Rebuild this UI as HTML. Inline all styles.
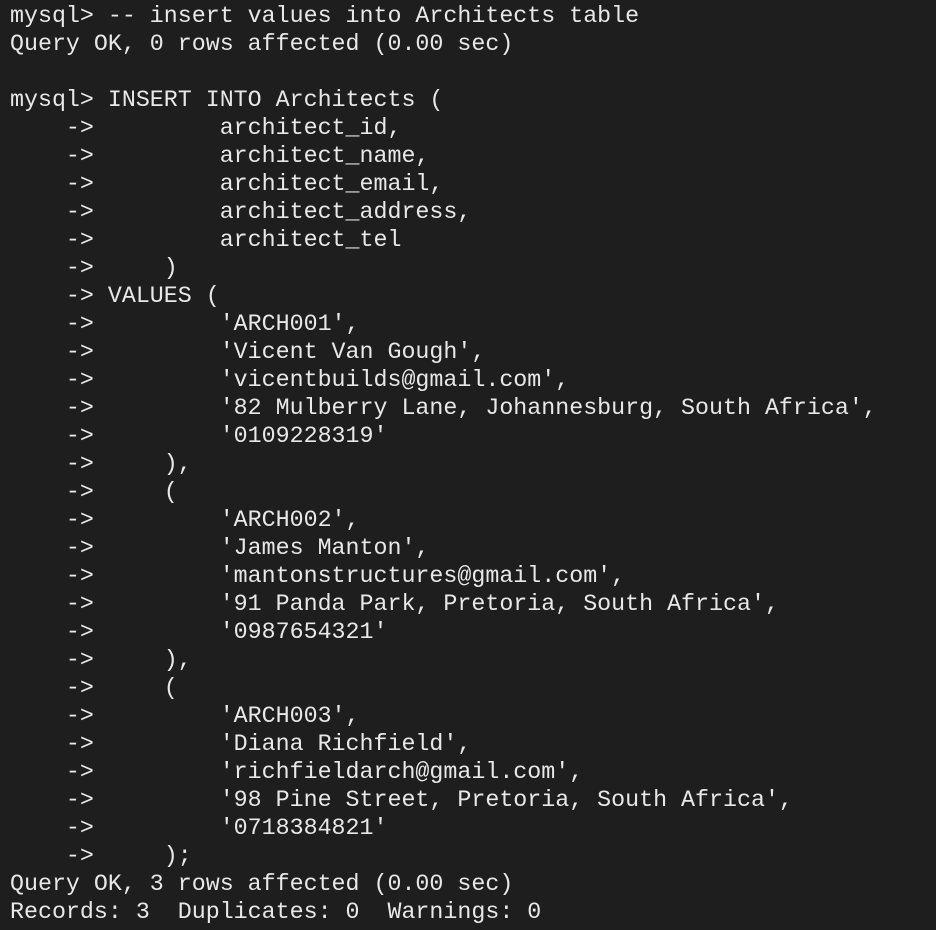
<!DOCTYPE html>
<html><head><style>
html,body{margin:0;padding:0;background:#1e1e1e;width:936px;height:930px;overflow:hidden}
pre{margin:0;padding:2px 0 0 10px;font-family:"Liberation Mono",monospace;font-size:23.3px;line-height:28px;color:#e8e8e8;white-space:pre}
</style></head><body><pre>mysql&gt; -- insert values into Architects table
Query OK, 0 rows affected (0.00 sec)

mysql&gt; INSERT INTO Architects (
    -&gt;         architect_id,
    -&gt;         architect_name,
    -&gt;         architect_email,
    -&gt;         architect_address,
    -&gt;         architect_tel
    -&gt;     )
    -&gt; VALUES (
    -&gt;         'ARCH001',
    -&gt;         'Vicent Van Gough',
    -&gt;         'vicentbuilds@gmail.com',
    -&gt;         '82 Mulberry Lane, Johannesburg, South Africa',
    -&gt;         '0109228319'
    -&gt;     ),
    -&gt;     (
    -&gt;         'ARCH002',
    -&gt;         'James Manton',
    -&gt;         'mantonstructures@gmail.com',
    -&gt;         '91 Panda Park, Pretoria, South Africa',
    -&gt;         '0987654321'
    -&gt;     ),
    -&gt;     (
    -&gt;         'ARCH003',
    -&gt;         'Diana Richfield',
    -&gt;         'richfieldarch@gmail.com',
    -&gt;         '98 Pine Street, Pretoria, South Africa',
    -&gt;         '0718384821'
    -&gt;     );
Query OK, 3 rows affected (0.00 sec)
Records: 3  Duplicates: 0  Warnings: 0</pre></body></html>
